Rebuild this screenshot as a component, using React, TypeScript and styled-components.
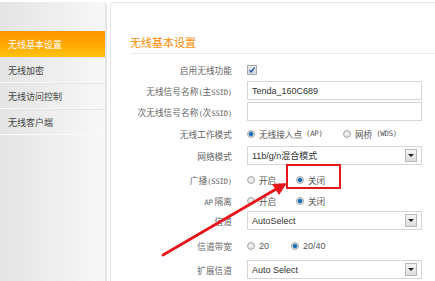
import React from "react";
import styled, { createGlobalStyle, css } from "styled-components";

const Global = createGlobalStyle`
  html, body { margin: 0; padding: 0; background: #fff; }
  body { font-family: "Noto Sans CJK SC", "Liberation Sans", sans-serif; }
  #root { width: 435px; height: 281px; overflow: hidden; position: relative; }
`;

const Page = styled.div`
  display: flex;
  align-items: stretch;
  width: 435px;
  height: 281px;
  padding-top: 2px;
  box-sizing: border-box;
  position: relative;
`;

const Sidebar = styled.nav`
  width: 105px;
  flex: none;
  padding-top: 29px;
  background: linear-gradient(to right, #e4e4e4, #f2f2f2 70%, #f8f8f8);
  border-right: 2px solid #e4e4e4;
  border-top-right-radius: 4px;
  display: flex;
  flex-direction: column;
`;

const NavItem = styled.div<{ $active?: boolean }>`
  height: 26px;
  box-sizing: border-box;
  display: flex;
  align-items: center;
  padding-left: 8px;
  font-size: 9px;
  color: #444;
  border-bottom: 1px solid #fafafa;
  border-top: 1px solid #e2e2e2;
  ${(p) =>
    p.$active &&
    css`
      background: linear-gradient(to bottom, #ff9400, #ffa800 55%, #ffc413);
      color: #fff;
      border: none;
    `}
`;

const Panel = styled.main`
  flex: 1;
  margin-left: 3px;
  border: 1px solid #e6e6e6;
  border-right: none;
  border-bottom: none;
  border-top-left-radius: 4px;
  background: #fff;
  padding-left: 19px;
  padding-top: 32px;
  box-sizing: border-box;
`;

const Title = styled.h2`
  margin: 0;
  font-size: 11px;
  font-weight: normal;
  color: #ff8a00;
  line-height: 14px;
  height: 18px;
  border-bottom: 1px solid #ececec;
`;

const Form = styled.div`
  display: flex;
  flex-direction: column;
  margin-top: 6px;
  margin-left: -19px;
`;

const Row = styled.div<{ $h: number }>`
  display: grid;
  grid-template-columns: 121px 175px;
  column-gap: 15px;
  align-items: center;
  height: ${(p) => p.$h}px;
`;

const Label = styled.div`
  text-align: right;
  font-size: 8.6px;
  color: #666;
  white-space: nowrap;
  letter-spacing: 0.1px;
`;

const Small = styled.span`
  font-family: "DejaVu Sans Mono", monospace;
  font-size: 7.4px;
  letter-spacing: -0.3px;
`;

const Box = styled.div`
  height: 19px;
  box-sizing: border-box;
  border: 1px solid #d6d6d6;
  display: flex;
  align-items: center;
  padding-left: 4px;
  font-family: "Liberation Sans", "Noto Sans CJK SC", sans-serif;
  font-size: 9px;
  color: #333;
  position: relative;
`;

const DropBtn = styled.span`
  position: absolute;
  right: 4px;
  top: 2px;
  width: 12px;
  height: 13px;
  box-sizing: border-box;
  border: 1px solid #b8b8b8;
  background: linear-gradient(#f6f6f6, #dcdcdc);
  display: flex;
  align-items: center;
  justify-content: center;
  &::after {
    content: "";
    border-left: 3px solid transparent;
    border-right: 3px solid transparent;
    border-top: 3px solid #222;
  }
`;

const Check = styled.span`
  width: 10px;
  height: 10px;
  box-sizing: border-box;
  border: 1px solid #a9a9a9;
  background: linear-gradient(#e8eaf0, #d4d8e2);
  display: flex;
  align-items: center;
  justify-content: center;
`;

const Radios = styled.div`
  display: flex;
  align-items: center;
`;

const RadioItem = styled.label<{ $w?: number }>`
  display: flex;
  align-items: center;
  gap: 4px;
  width: ${(p) => (p.$w ? `${p.$w}px` : "auto")};
  font-size: 8.6px;
  color: #555;
  white-space: nowrap;
`;

const Dot = styled.span<{ $on?: boolean }>`
  width: 8px;
  height: 8px;
  border-radius: 50%;
  box-sizing: border-box;
  border: 1px solid #a8a8a8;
  background: ${(p) =>
    p.$on
      ? "radial-gradient(circle, #1b6fb0 0 1.8px, #7fb2d8 2.2px, #e4e4e4 2.8px)"
      : "radial-gradient(circle, #f4f4f4, #d8d8d8)"};
`;

const Num = styled.span`
  font-family: "Liberation Sans", sans-serif;
  font-size: 9px;
`;

const Highlight = styled.div`
  position: absolute;
  left: 286px;
  top: 164px;
  width: 55px;
  height: 25px;
  box-sizing: border-box;
  border: 2px solid #e8161c;
`;

const Arrow = styled.svg`
  position: absolute;
  left: 0;
  top: 0;
  pointer-events: none;
`;

const Radio = ({ on, w, children }: { on?: boolean; w?: number; children: React.ReactNode }) => (
  <RadioItem $w={w}>
    <Dot $on={on} />
    {children}
  </RadioItem>
);

export default function App() {
  return (
    <>
      <Global />
      <Page>
        <Sidebar>
          <NavItem $active>无线基本设置</NavItem>
          <NavItem>无线加密</NavItem>
          <NavItem>无线访问控制</NavItem>
          <NavItem>无线客户端</NavItem>
        </Sidebar>
        <Panel>
          <Title>无线基本设置</Title>
          <Form>
            <Row $h={20}>
              <Label>启用无线功能</Label>
              <Check>
                <svg width="8" height="8" viewBox="0 0 8 8">
                  <path d="M1.5 4.2 L3.2 6 L6.6 1.5" fill="none" stroke="#2a4fa8" strokeWidth="1.3" />
                </svg>
              </Check>
            </Row>
            <Row $h={21}>
              <Label>
                无线信号名称<Small>(</Small>主<Small>SSID)</Small>
              </Label>
              <Box>Tenda_160C689</Box>
            </Row>
            <Row $h={21}>
              <Label>
                次无线信号名称<Small>(</Small>次<Small>SSID)</Small>
              </Label>
              <Box />
            </Row>
            <Row $h={23}>
              <Label>无线工作模式</Label>
              <Radios>
                <Radio on w={96}>
                  无线接入点<Small>(AP)</Small>
                </Radio>
                <Radio>
                  网桥<Small>(WDS)</Small>
                </Radio>
              </Radios>
            </Row>
            <Row $h={21}>
              <Label>网络模式</Label>
              <Box>
                11b/g/n混合模式
                <DropBtn />
              </Box>
            </Row>
            <Row $h={27}>
              <Label>
                广播<Small>(SSID)</Small>
              </Label>
              <Radios>
                <Radio w={49}>开启</Radio>
                <Radio on>关闭</Radio>
              </Radios>
            </Row>
            <Row $h={15}>
              <Label>
                <Small>AP</Small> 隔离
              </Label>
              <Radios>
                <Radio w={49}>开启</Radio>
                <Radio on>关闭</Radio>
              </Radios>
            </Row>
            <Row $h={25}>
              <Label>信道</Label>
              <Box>
                AutoSelect
                <DropBtn />
              </Box>
            </Row>
            <Row $h={26}>
              <Label>信道带宽</Label>
              <Radios>
                <Radio w={44}>
                  <Num>20</Num>
                </Radio>
                <Radio on>
                  <Num>20/40</Num>
                </Radio>
              </Radios>
            </Row>
            <Row $h={21}>
              <Label>扩展信道</Label>
              <Box>
                Auto Select
                <DropBtn />
              </Box>
            </Row>
          </Form>
        </Panel>
        <Highlight />
        <Arrow width="435" height="281" viewBox="0 0 435 281">
          <path d="M163 255 L278 188" stroke="#e8161c" strokeWidth="2.8" strokeLinecap="round" />
          <polygon points="287,183 272,184 279,195" fill="#e8161c" />
        </Arrow>
      </Page>
    </>
  );
}
